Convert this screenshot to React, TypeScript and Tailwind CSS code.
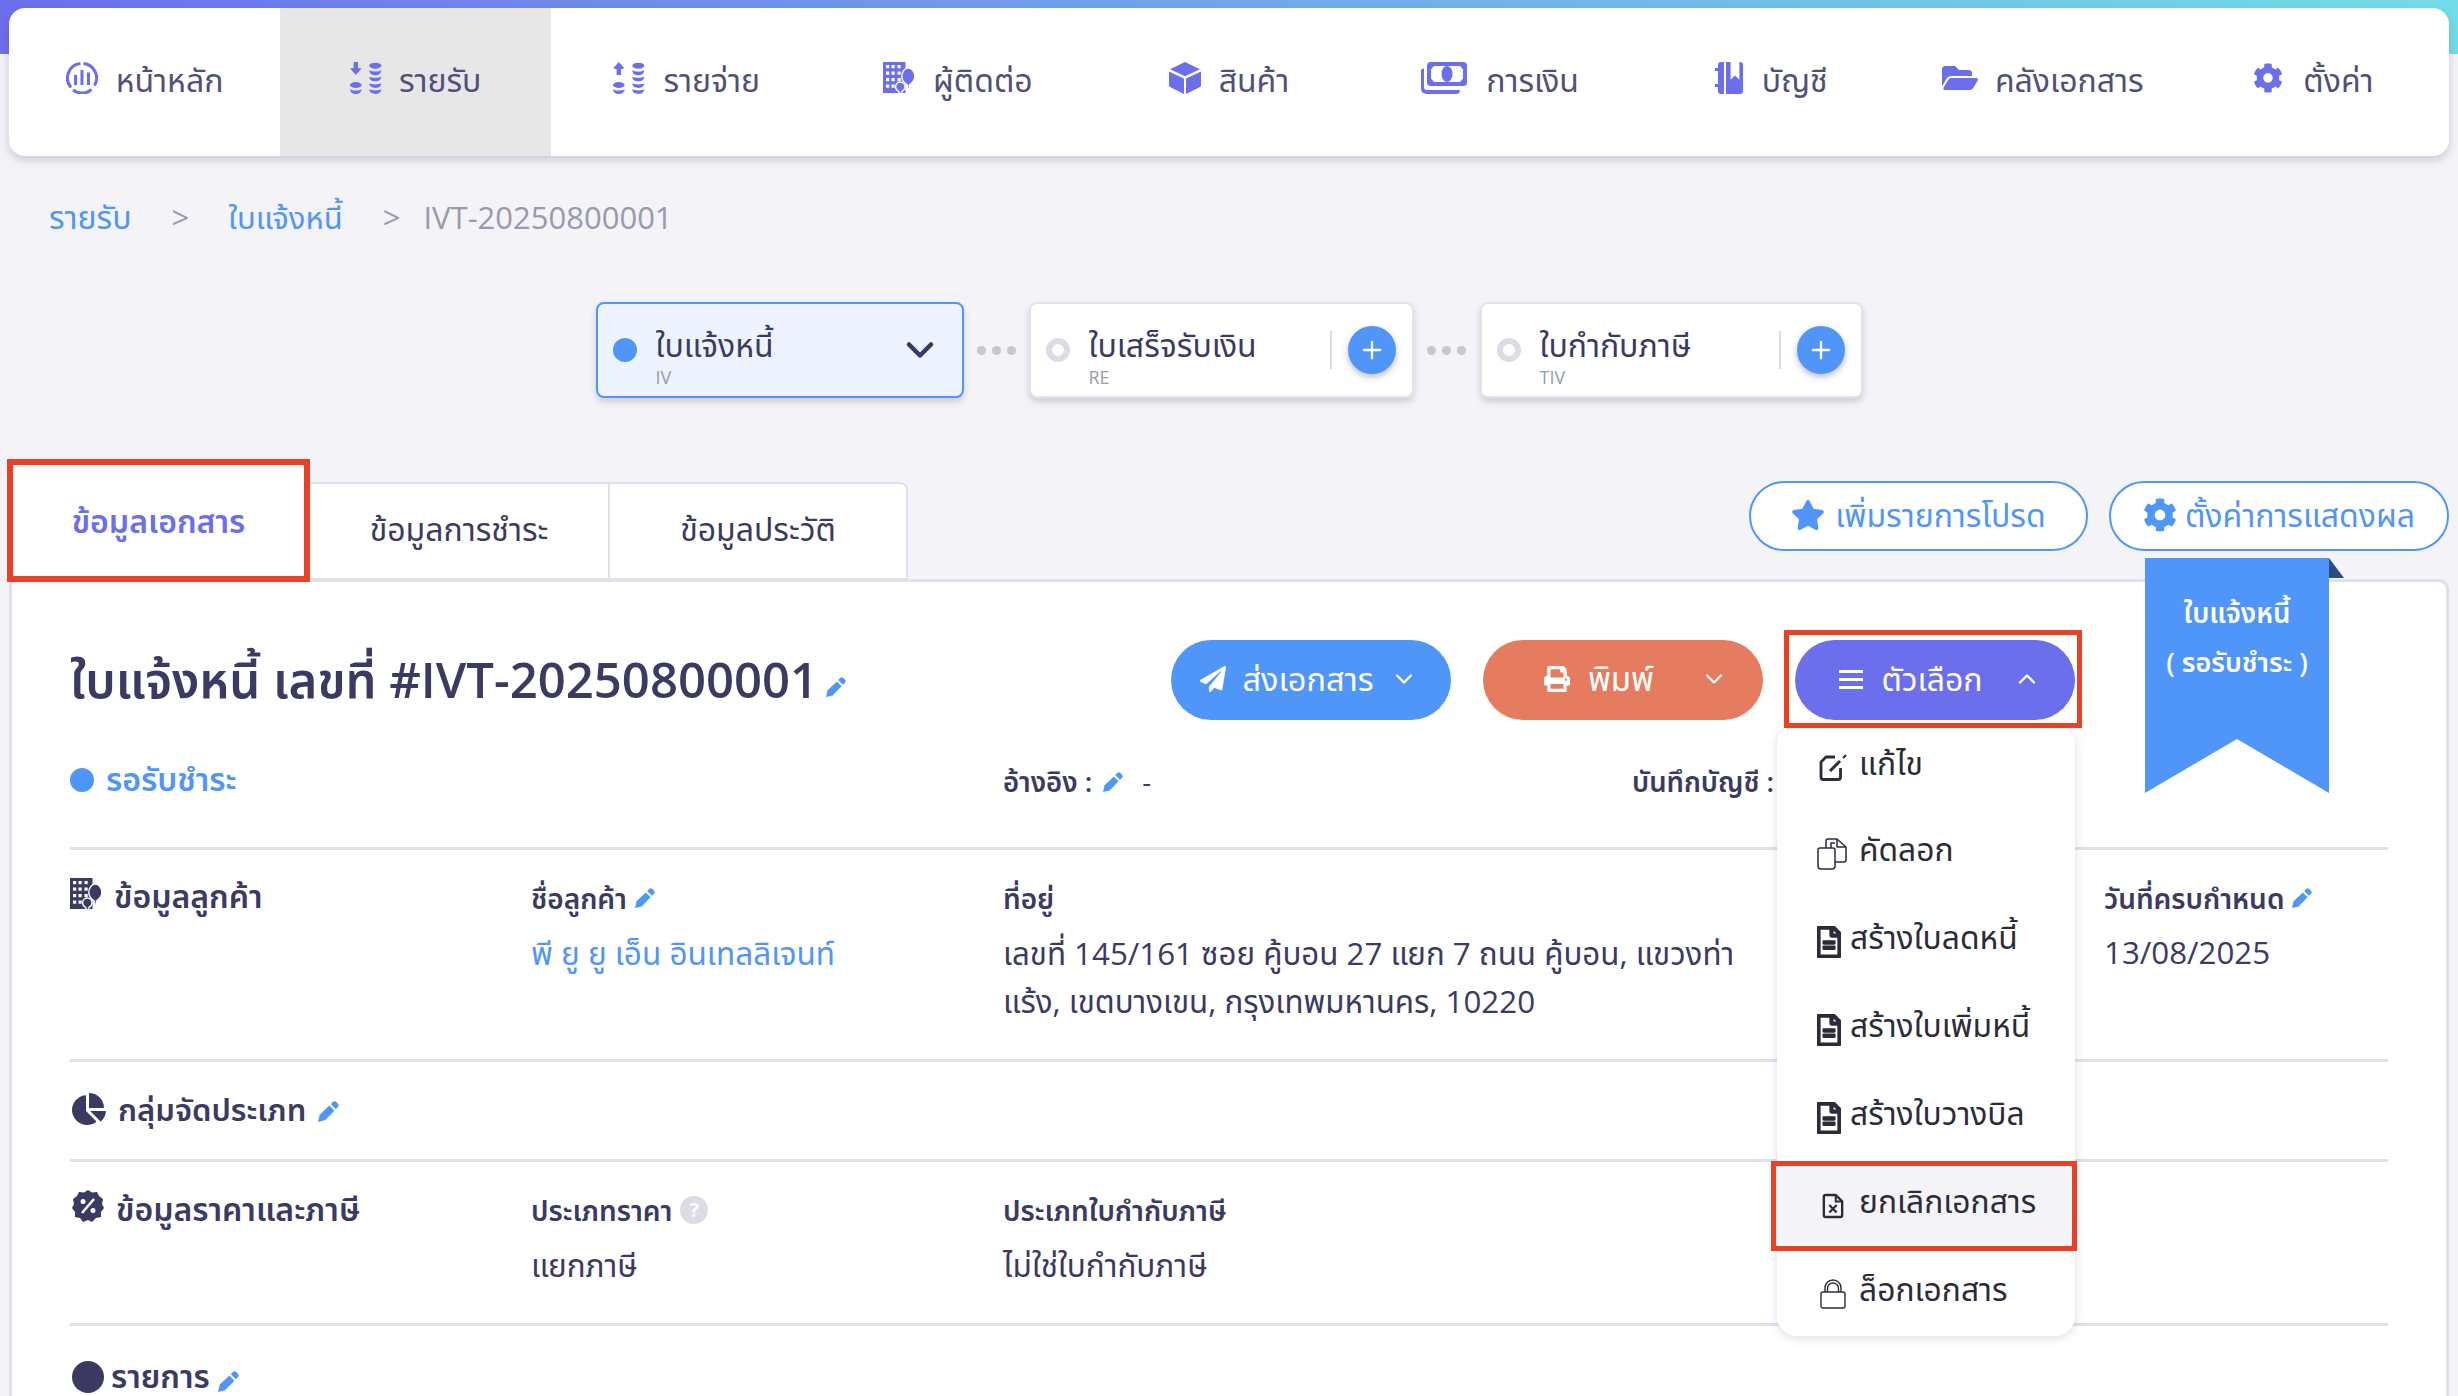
import React from "react";
import { ChevronDown, ChevronUp, Plus } from "lucide-react";
import { FaFolderOpen, FaCog, FaStar, FaPaperPlane, FaPrint, FaChartPie, FaRegFileAlt } from "react-icons/fa";

const Pencil = ({ className = "" }: { className?: string }) => (
  <svg viewBox="0 0 20 20" className={"inline-block " + className} fill="#5096f9">
    <path d="M0 20 L1.6 13.2 L10.8 4.4 L15.6 9.2 L6.6 18.4 Z" />
    <path d="M12.2 3 L14 1.2 a2.6 2.6 0 0 1 3.6 0 L18.8 2.4 a2.6 2.6 0 0 1 0 3.6 L17 7.8 Z" />
  </svg>
);

const HomeIcon = () => (
  <svg viewBox="0 0 32 32" className="h-[32px] w-[32px]" fill="none" stroke="#6c6fec" strokeWidth="3">
    <path d="M5 25.5 A14.5 14.5 0 0 1 14.5 1.6" />
    <path d="M17.5 1.6 A14.5 14.5 0 0 1 28.5 23.5" />
    <path d="M7 28 A14.5 14.5 0 0 0 25.5 27.5" />
    <path d="M9.5 13v10M16 8v15M22.5 10.5v12.5" />
  </svg>
);

const Coins = ({ up }: { up?: boolean }) => (
  <svg viewBox="0 0 32 32" className="h-[32px] w-[32px]" fill="#6c6fec">
    {up ? <path d="M5.8 0 L11.6 6.5 L8 7 V13 H3.6 V7 L0 6.5 Z" /> : <path d="M3.6 0 H8 V6 L11.6 6.5 L5.8 13 L0 6.5 L3.6 6 Z" />}
    <ellipse cx="5.8" cy="23" rx="5.8" ry="3" />
    <path d="M0 27 C2 29 9.6 29 11.6 27 C11.6 30 9 32 5.8 32 C2.6 32 0 30 0 27 Z" />
    <ellipse cx="25.3" cy="3.7" rx="6" ry="3" />
    <path d="M19.3 8 C21.5 10 29 10 31.3 8 C31.3 11.4 28.5 13.3 25.3 13.3 C22 13.3 19.3 11.4 19.3 8 Z" />
    <path d="M19.3 14.7 C21.5 16.2 29 16.2 31.3 14.7 C31.3 17.6 28.5 19.3 25.3 19.3 C22 19.3 19.3 17.6 19.3 14.7 Z" />
    <path d="M19.3 21.3 C21.5 22.8 29 22.8 31.3 21.3 C31.3 24.2 28.5 26 25.3 26 C22 26 19.3 24.2 19.3 21.3 Z" />
    <path d="M19.3 27.3 C21.5 28.8 29 28.8 31.3 27.3 C31.3 30.2 28.5 32 25.3 32 C22 32 19.3 30.2 19.3 27.3 Z" />
  </svg>
);

const BuildingPin = ({ color = "#6c6fec", className = "h-[32px] w-[32px]" }: { color?: string; className?: string }) => (
  <svg viewBox="0 0 32 32" className={className}>
    <rect x="0" y="0" width="22.5" height="31" fill={color} />
    <g fill="#fff">
      <rect x="3" y="3" width="3.2" height="3.2" /><rect x="8.5" y="3" width="3.2" height="3.2" /><rect x="14.5" y="3" width="3.2" height="3.2" />
      <rect x="3" y="9.5" width="3.2" height="3.2" /><rect x="8.5" y="9.5" width="3.2" height="3.2" /><rect x="14.5" y="9.5" width="3.2" height="3.2" />
      <rect x="3" y="16" width="3.2" height="3.2" /><rect x="8.5" y="16" width="3.2" height="3.2" /><rect x="14.5" y="16" width="3.2" height="3.2" />
      <rect x="3" y="22.5" width="3.2" height="3.2" /><rect x="8.5" y="22.5" width="3.2" height="3.2" />
    </g>
    <path d="M25.3 6 C29 6 31.8 10 31.8 14.5 C31.8 19 28.5 21.5 26.4 23 L25.6 31.5 L25 31.5 L24.2 23 C22 21.5 18.8 19 18.8 14.5 C18.8 10 21.6 6 25.3 6 Z" fill={color} stroke="#fff" strokeWidth="1.4" />
    <path d="M17.3 20 C20 20 22 22.3 22 25 C22 27.2 20.5 28.5 19 29.3 L18 32 L16.6 32 L15.6 29.3 C14 28.5 12.6 27.2 12.6 25 C12.6 22.3 14.6 20 17.3 20 Z" fill={color} stroke="#fff" strokeWidth="1.4" />
  </svg>
);

const CubeIcon = () => (
  <svg viewBox="0 0 32 32" className="h-[32px] w-[32px]" fill="#6c6fec">
    <path d="M16 0 L31 7.2 L16 14.2 L1 7.2 Z" />
    <path d="M0 9.5 L15 16.4 V32 L1 25 Q0 24.5 0 23.5 Z" />
    <path d="M32 9.5 L17 16.4 V32 L31 25 Q32 24.5 32 23.5 Z" />
  </svg>
);

const MoneyIcon = () => (
  <svg viewBox="0 0 46 32" className="h-[32px] w-[46px]">
    <path d="M10 0 H42 a4 4 0 0 1 4 4 V20 a4 4 0 0 1 -4 4 H10 a4 4 0 0 1 -4 -4 V4 a4 4 0 0 1 4 -4 Z" fill="#6c6fec" />
    <path d="M13 4 H39 L42 7.5 V16.5 L39 20 H13 L10 16.5 V7.5 Z" fill="#fff" />
    <ellipse cx="26" cy="12" rx="5.5" ry="8" fill="#6c6fec" />
    <path d="M0 9 a2.5 2.5 0 0 1 3 -2.5 V25 a3 3 0 0 0 3 3 H39 a4 4 0 0 1 -4 4 H5 a5 5 0 0 1 -5 -5 Z" fill="#6c6fec" />
  </svg>
);

const NotebookIcon = () => (
  <svg viewBox="0 0 28 32" className="h-[32px] w-[28px]">
    <path d="M6 0 H9 V32 H6 a3 3 0 0 1 -3 -3 V25 H0 V22 H3 V9 H0 V6 H3 V3 a3 3 0 0 1 3 -3 Z" fill="#6c6fec" />
    <path d="M11 0 H25 a3 3 0 0 1 3 3 V29 a3 3 0 0 1 -3 3 H11 Z" fill="#6c6fec" />
    <path d="M15.6 0 H24.4 V17.7 L20 13.6 L15.6 17.7 Z" fill="#fff" />
  </svg>
);

const PercentBadge = () => (
  <svg viewBox="0 0 32 32" className="h-[32px] w-[32px]">
    <path d="M16 0 L20 2.5 L25 2 L27 6 L31 9 L30 14 L32 18 L29 22 L29 27 L24 28 L20 32 L16 30 L11 32 L8 28 L3 27 L3 22 L0 18 L2 14 L1 9 L5 6 L7 2 L12 2.5 Z" fill="#3a3a63" />
    <circle cx="11" cy="11.5" r="2.5" fill="#fff" />
    <circle cx="21" cy="20.5" r="2.5" fill="#fff" />
    <path d="M22 9 L10 23" stroke="#fff" strokeWidth="2.6" />
  </svg>
);

const EditIcon = () => (
  <svg viewBox="0 0 30 28" className="h-[28px] w-[30px]" fill="none" stroke="#2b2b3a">
    <path d="M16 3 H7 L2 8 V23 a2.5 2.5 0 0 0 2.5 2.5 H19 a2.5 2.5 0 0 0 2.5 -2.5 V14" strokeWidth="2.8" strokeLinejoin="round" />
    <path d="M11 17 L21 7" strokeWidth="3" />
    <path d="M24 4 L27 1" strokeWidth="2.2" />
  </svg>
);

const CopyIcon = () => (
  <svg viewBox="0 0 30 32" className="h-[32px] w-[30px]" fill="none" stroke="#2b2b3a" strokeWidth="1.5" strokeLinejoin="round">
    <path d="M3 10 H16 a2 2 0 0 1 2 2 V28 a3 3 0 0 1 -3 3 H4 a3 3 0 0 1 -3 -3 V12 a2 2 0 0 1 2 -2 Z" />
    <path d="M9 10 V3 a2 2 0 0 1 2 -2 H20 L29 9 V22 a2 2 0 0 1 -2 2 H18" />
    <path d="M20 1 V9 H29" />
    <path d="M14 10 V5 H18" />
  </svg>
);

const CancelIcon = () => (
  <svg viewBox="0 0 24 28" className="h-[28px] w-[22px]" fill="none" stroke="#2b2b3a">
    <path d="M15 2 H4 a2 2 0 0 0 -2 2 V24 a2 2 0 0 0 2 2 H20 a2 2 0 0 0 2 -2 V9 Z" strokeWidth="2.6" strokeLinejoin="round" />
    <path d="M15 2 V9 H22" strokeWidth="2.2" />
    <path d="M8 13 L16 21 M16 13 L8 21" strokeWidth="2.4" />
  </svg>
);

const LockIcon = () => (
  <svg viewBox="0 0 26 30" className="h-[30px] w-[26px]" fill="none" stroke="#2b2b3a" strokeWidth="1.4">
    <rect x="1" y="13" width="24" height="16" rx="2" />
    <path d="M5 13 V9 a8 8 0 0 1 16 0 V13" />
    <path d="M7.5 13 V9.5 a5.5 5.5 0 0 1 11 0 V13" />
  </svg>
);

const navItems: { icon: React.ReactNode; label: string; active?: boolean; gap: string }[] = [
  { icon: <HomeIcon />, label: "หน้าหลัก", gap: "gap-[18px]" },
  { icon: <Coins />, label: "รายรับ", active: true, gap: "gap-[17px]" },
  { icon: <Coins up />, label: "รายจ่าย", gap: "gap-[18px]" },
  { icon: <BuildingPin />, label: "ผู้ติดต่อ", gap: "gap-[18px]" },
  { icon: <CubeIcon />, label: "สินค้า", gap: "gap-[18px]" },
  { icon: <MoneyIcon />, label: "การเงิน", gap: "gap-[19px]" },
  { icon: <NotebookIcon />, label: "บัญชี", gap: "gap-[19px]" },
  { icon: <FaFolderOpen className="h-[32px] w-[38px] text-[#6c6fec]" />, label: "คลังเอกสาร", gap: "gap-[16px]" },
  { icon: <FaCog className="h-[32px] w-[30px] text-[#6c6fec]" />, label: "ตั้งค่า", gap: "gap-[20px]" },
];

const docIcon = <FaRegFileAlt className="h-[32px] w-[24px] stroke-[20] text-[#2b2b3a]" />;

const menuItems: { icon: React.ReactNode; label: string; pad: string; gap: string; active?: boolean }[] = [
  { icon: <EditIcon />, label: "แก้ไข", pad: "pl-[42px]", gap: "gap-[10px]" },
  { icon: <CopyIcon />, label: "คัดลอก", pad: "pl-[40px]", gap: "gap-[12px]" },
  { icon: docIcon, label: "สร้างใบลดหนี้", pad: "pl-[40px]", gap: "gap-[9px]" },
  { icon: docIcon, label: "สร้างใบเพิ่มหนี้", pad: "pl-[40px]", gap: "gap-[9px]" },
  { icon: docIcon, label: "สร้างใบวางบิล", pad: "pl-[40px]", gap: "gap-[9px]" },
  { icon: <CancelIcon />, label: "ยกเลิกเอกสาร", pad: "pl-[45px]", gap: "gap-[15px]", active: true },
  { icon: <LockIcon />, label: "ล็อกเอกสาร", pad: "pl-[43px]", gap: "gap-[13px]" },
];

const Step = ({ title, sub, w, current }: { title: string; sub: string; w: string; current?: boolean }) => (
  <div
    className={
      "flex h-[96px] items-center rounded-[8px] border-2 pl-[15px] pr-[16px] shadow-[0_4px_6px_rgba(60,60,100,0.2)] " +
      w +
      (current ? " border-[#5096f9] bg-[#edf4ff]" : " border-[#e3e3ec] bg-white")
    }
  >
    {current ? (
      <span className="h-[24px] w-[24px] rounded-full bg-[#5096f9]" />
    ) : (
      <span className="h-[24px] w-[24px] rounded-full border-[6px] border-[#dcdce6] bg-white" />
    )}
    <div className="ml-[19px] flex flex-1 flex-col pt-[10px]">
      <span className="text-[32px] leading-[44px] text-[#3a3a63]">{title}</span>
      <span className="text-[18px] leading-[20px] text-[#9a9aae]">{sub}</span>
    </div>
    {current ? (
      <ChevronDown className="mr-[4px] h-[44px] w-[44px] text-[#3a3a63]" strokeWidth={2.5} />
    ) : (
      <div className="flex items-center">
        <span className="h-[38px] w-[2px] bg-[#dcdce6]" />
        <span className="ml-[16px] flex h-[48px] w-[48px] items-center justify-center rounded-full bg-[#5096f9] shadow-[0_3px_6px_rgba(60,60,100,0.35)]">
          <Plus className="h-[28px] w-[28px] text-white" strokeWidth={2} />
        </span>
      </div>
    )}
  </div>
);

const Dots = ({ w }: { w: string }) => (
  <div className={"flex items-center justify-center gap-[6px] " + w}>
    <span className="h-[9px] w-[9px] rounded-full bg-[#c8c8c8]" />
    <span className="h-[9px] w-[9px] rounded-full bg-[#c8c8c8]" />
    <span className="h-[9px] w-[9px] rounded-full bg-[#c8c8c8]" />
  </div>
);

const Rule = () => <div className="h-[3px] bg-[#e0e0ea]" />;

const Label = ({ children }: { children: React.ReactNode }) => (
  <div className="flex h-[40px] items-center gap-[8px] text-[28px] font-semibold text-[#3a3a63]">{children}</div>
);

export default function App() {
  return (
    <div
      className="relative h-[1396px] w-[2458px] overflow-hidden bg-[#f3f3f8] text-[#3a3a63]"
      style={{ fontFamily: '"Open Sans", "Noto Sans", "Noto Sans Thai", Roboto, sans-serif' }}
    >
      <div className="h-[54px] bg-gradient-to-r from-[#6c6fec] to-[#72dde6]" />
      <nav className="relative mx-[9px] -mt-[46px] grid h-[148px] grid-cols-9 overflow-hidden rounded-[16px] bg-white shadow-[0_4px_8px_rgba(60,60,100,0.22)]">
        {navItems.map((n) => (
          <div key={n.label} className={"flex items-start justify-center pt-[54px] " + n.gap + (n.active ? " bg-[#e7e7e8]" : "")}>
            {n.icon}
            <span className="-mt-[4px] text-[32px] leading-[44px] text-[#50507a]">{n.label}</span>
          </div>
        ))}
      </nav>

      <div className="mt-[37px] flex h-[48px] items-center pl-[49px] text-[31px] text-[#9a9aae]">
        <span className="text-[32px] text-[#5096f9]">รายรับ</span>
        <span className="ml-[40px]">&gt;</span>
        <span className="ml-[39px] text-[#5096f9]">ใบแจ้งหนี้</span>
        <span className="ml-[40px]">&gt;</span>
        <span className="ml-[23px]">IVT-20250800001</span>
      </div>

      <div className="mt-[61px] flex justify-center">
        <Step title="ใบแจ้งหนี้" sub="IV" w="w-[368px]" current />
        <Dots w="w-[65px]" />
        <Step title="ใบเสร็จรับเงิน" sub="RE" w="w-[385px]" />
        <Dots w="w-[66px]" />
        <Step title="ใบกำกับภาษี" sub="TIV" w="w-[383px]" />
      </div>

      <div className="mt-[61px] flex h-[123px] items-end pl-[7px] pr-[9px]">
        <div className="relative z-10 flex h-[123px] w-[303px] items-center justify-center border-[6px] border-[#e94125] bg-white text-[32px] font-semibold text-[#6c6fec]">
          ข้อมูลเอกสาร
        </div>
        <div className="mb-[2px] flex h-[98px] w-[300px] items-center justify-center border-2 border-l-0 border-[#e0e0ea] bg-white pb-[4px] text-[32px] text-[#3a3a63]">
          ข้อมูลการชำระ
        </div>
        <div className="mb-[2px] flex h-[98px] w-[298px] items-center justify-center rounded-tr-[8px] border-2 border-l-0 border-[#e0e0ea] bg-white pb-[4px] text-[32px] text-[#3a3a63]">
          ข้อมูลประวัติ
        </div>
        <div className="mb-[31px] ml-auto flex gap-[21px]">
          <div className="flex h-[70px] w-[339px] items-center justify-center gap-[10px] rounded-full border-2 border-[#5096f9] bg-white pb-[2px] text-[32px] text-[#5096f9]">
            <FaStar className="h-[32px] w-[34px]" />
            เพิ่มรายการโปรด
          </div>
          <div className="flex h-[70px] w-[340px] items-center justify-center gap-[8px] rounded-full border-2 border-[#5096f9] bg-white pb-[2px] text-[32px] text-[#5096f9]">
            <FaCog className="h-[34px] w-[34px]" />
            ตั้งค่าการแสดงผล
          </div>
        </div>
      </div>

      <div className="mx-[9px] -mt-[3px] h-[830px] rounded-tr-[10px] border-[3px] border-b-0 border-[#e0e0ea] bg-white pl-[58px] pr-[58px] pt-[58px]">
        <div className="flex h-[80px] items-center">
          <h1 className="text-[49px] font-semibold text-[#3a3a63]">ใบแจ้งหนี้ เลขที่ #IVT-20250800001</h1>
          <Pencil className="ml-[8px] mt-[14px] h-[20px] w-[20px]" />
          <div className="ml-auto mr-[313px] flex gap-[32px]">
            <div className="flex h-[80px] w-[280px] items-center justify-center gap-[16px] rounded-full bg-[#5096f9] pr-[4px] pb-[2px] text-[32.5px] text-white">
              <FaPaperPlane className="h-[26px] w-[26px]" />
              ส่งเอกสาร
              <ChevronDown className="h-[28px] w-[28px]" strokeWidth={2} />
            </div>
            <div className="flex h-[80px] w-[280px] items-center justify-center gap-[18px] rounded-full bg-[#e57c60] pl-[26px] pb-[2px] text-[33px] text-white">
              <FaPrint className="h-[26px] w-[26px]" />
              พิมพ์
              <ChevronDown className="ml-[28px] h-[28px] w-[28px]" strokeWidth={2} />
            </div>
            <div className="flex h-[80px] w-[280px] items-center justify-center gap-[18px] rounded-full bg-[#6c6fec] pl-[10px] pb-[2px] text-[32px] text-white">
              <span className="flex w-[24px] flex-col gap-[5px]">
                <span className="h-[3px] bg-white" />
                <span className="h-[3px] bg-white" />
                <span className="h-[3px] bg-white" />
              </span>
              ตัวเลือก
              <ChevronUp className="ml-[12px] h-[28px] w-[28px]" strokeWidth={2} />
            </div>
          </div>
        </div>

        <div className="mt-[40px] flex h-[40px] items-center">
          <div className="flex w-[933px] items-center gap-[12px] text-[32px] font-semibold text-[#5096f9]">
            <span className="h-[24px] w-[24px] rounded-full bg-[#5096f9]" />
            <span className="-mt-[3px]">รอรับชำระ</span>
          </div>
          <div className="flex w-[629px] items-center gap-[11px] pt-[3px] text-[27.5px] font-semibold">
            อ้างอิง :
            <Pencil className="h-[20px] w-[20px]" />
            <span className="ml-[8px] font-normal">-</span>
          </div>
          <div className="pt-[3px] text-[27.5px] font-semibold">บันทึกบัญชี :</div>
        </div>

        <div className="mt-[47px]"><Rule /></div>

        <div className="flex h-[209px] pt-[28px]">
          <div className="flex w-[461px] items-start gap-[12px]">
            <BuildingPin color="#3a3a63" />
            <span className="-mt-[4px] text-[32px] font-semibold leading-[44px]">ข้อมูลลูกค้า</span>
          </div>
          <div className="w-[472px]">
            <Label>ชื่อลูกค้า <Pencil className="h-[20px] w-[20px]" /></Label>
            <div className="mt-[11px] text-[31.5px] text-[#5096f9]">พี ยู ยู เอ็น อินเทลลิเจนท์</div>
          </div>
          <div className="w-[1101px]">
            <Label>ที่อยู่</Label>
            <div className="mt-[11px] w-[800px] text-[31.3px] leading-[48px]">
              เลขที่ 145/161 ซอย คู้บอน 27 แยก 7 ถนน คู้บอน, แขวงท่า<br />แร้ง, เขตบางเขน, กรุงเทพมหานคร, 10220
            </div>
          </div>
          <div>
            <Label>วันที่ครบกำหนด <Pencil className="h-[20px] w-[20px]" /></Label>
            <div className="mt-[11px] text-[31.3px]">13/08/2025</div>
          </div>
        </div>

        <Rule />
        <div className="flex h-[97px] items-center gap-[12px] pb-[3px] pl-[2px]">
          <FaChartPie className="h-[34px] w-[34px]" />
          <span className="text-[31px] font-semibold">กลุ่มจัดประเภท</span>
          <Pencil className="mt-[4px] h-[21px] w-[21px]" />
        </div>
        <Rule />
        <div className="flex h-[161px] pt-[28px]">
          <div className="flex w-[461px] items-start gap-[12px] pl-[2px]">
            <PercentBadge />
            <span className="-mt-[3px] text-[32px] font-semibold leading-[44px]">ข้อมูลราคาและภาษี</span>
          </div>
          <div className="w-[472px]">
            <Label>
              ประเภทราคา
              <span className="flex h-[28px] w-[28px] items-center justify-center rounded-full bg-[#dcdce6] text-[20px] font-bold text-white">?</span>
            </Label>
            <div className="mt-[11px] text-[31.5px]">แยกภาษี</div>
          </div>
          <div>
            <Label>ประเภทใบกำกับภาษี</Label>
            <div className="mt-[11px] text-[31.5px]">ไม่ใช่ใบกำกับภาษี</div>
          </div>
        </div>
        <Rule />
        <div className="flex h-[102px] items-center gap-[7px] pl-[2px]">
          <span className="h-[32px] w-[32px] rounded-full bg-[#3a3a63]" />
          <span className="-mt-[3px] text-[32px] font-semibold">รายการ</span>
          <Pencil className="ml-[1px] mt-[8px] h-[21px] w-[21px]" />
        </div>
      </div>

      {/* status ribbon */}
      <div className="absolute left-[2329px] top-[558px] h-0 w-0 border-b-[20px] border-r-[15px] border-b-[#2a4d80] border-r-transparent" />
      <div
        className="absolute left-[2145px] top-[558px] flex h-[235px] w-[184px] flex-col items-center bg-[#5096f9] pt-[31px] text-white"
        style={{ clipPath: "polygon(0 0, 100% 0, 100% 100%, 50% 77%, 0 100%)" }}
      >
        <span className="text-[27.5px] font-semibold leading-[48px]">ใบแจ้งหนี้</span>
        <span className="text-[27px] font-semibold leading-[50px]">( รอรับชำระ )</span>
      </div>

      {/* options menu */}
      <div className="absolute left-[1777px] top-[725px] h-[611px] w-[298px] rounded-[20px] bg-white shadow-[0_2px_10px_rgba(60,60,100,0.18)]">
        {menuItems.map((m, i) => (
          <div
            key={m.label}
            className={
              "flex items-center text-[31.8px] text-[#2b2b3a] " +
              (i === 0 ? "h-[85px] " : "h-[88px] ") +
              m.pad +
              " " +
              m.gap +
              (m.active ? " bg-[#f4f4f8]" : "")
            }
          >
            {m.icon}
            <span className="-mt-[10px]">{m.label}</span>
          </div>
        ))}
      </div>

      {/* red highlights */}
      <div className="absolute left-[1784px] top-[630px] h-[98px] w-[298px] border-[5px] border-[#e94125]" />
      <div className="absolute left-[1771px] top-[1161px] h-[90px] w-[306px] border-[5px] border-[#e94125]" />
    </div>
  );
}
